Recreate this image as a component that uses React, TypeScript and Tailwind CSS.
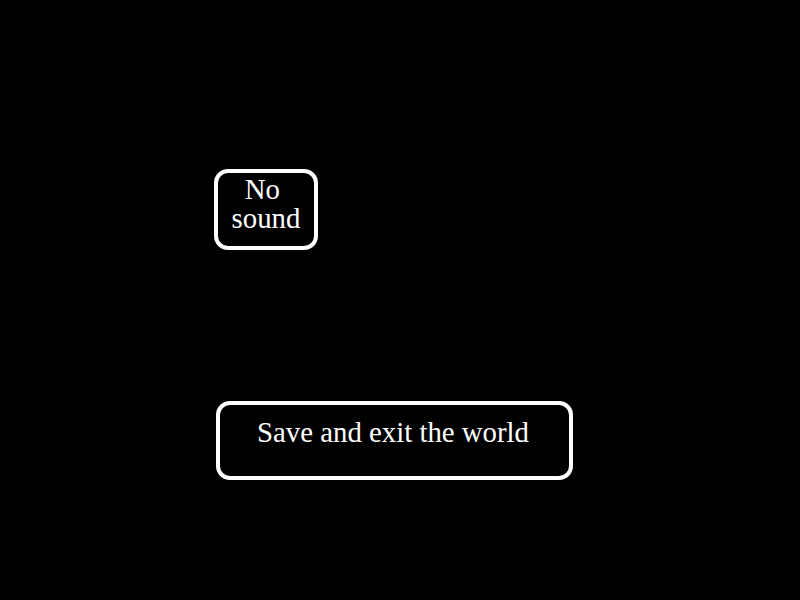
export default function App() {
  return (
    <div
      className="flex h-[600px] w-full flex-col items-start bg-black pl-[214px] pt-[169px] text-white"
      style={{ fontFamily: '"Liberation Serif", "Times New Roman", serif' }}
    >
      <button className="flex h-[81px] w-[104px] flex-col rounded-[14px] border-4 border-white pt-[2px] text-center text-[28.8px] leading-[29px] whitespace-break-spaces">
        {"No sound"}
      </button>

      <button className="ml-[2px] mt-[151px] flex h-[79px] w-[357px] justify-center rounded-[14px] border-4 border-white pt-[13px] pr-[3px] text-[28.8px] leading-[29px]">
        Save and exit the world
      </button>
    </div>
  );
}
